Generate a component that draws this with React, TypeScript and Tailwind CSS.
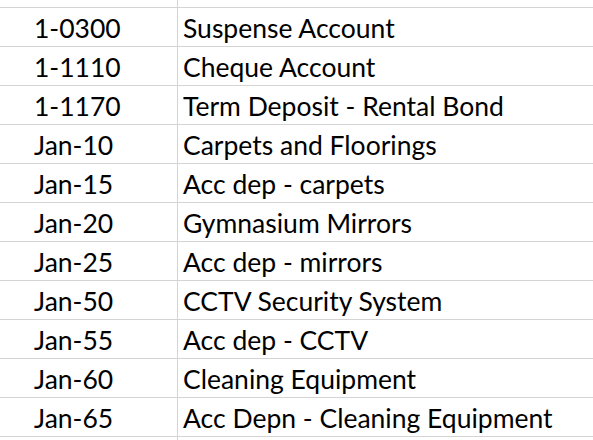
const rows: [string, string][] = [
  ['1-0300', 'Suspense Account'],
  ['1-1110', 'Cheque Account'],
  ['1-1170', 'Term Deposit - Rental Bond'],
  ['Jan-10', 'Carpets and Floorings'],
  ['Jan-15', 'Acc dep - carpets'],
  ['Jan-20', 'Gymnasium Mirrors'],
  ['Jan-25', 'Acc dep - mirrors'],
  ['Jan-50', 'CCTV Security System'],
  ['Jan-55', 'Acc dep - CCTV'],
  ['Jan-60', 'Cleaning Equipment'],
  ['Jan-65', 'Acc Depn - Cleaning Equipment'],
]

function Row({ code, name }: { code: string; name: string }) {
  return (
    <div className="flex h-[39px] border-t border-[#d4d4d4]">
      <div className="flex w-[178px] shrink-0 items-end border-r border-[#d4d4d4] pb-[5px] pl-[34px]">{code}</div>
      <div className="flex flex-1 items-end pb-[5px] pl-[5px] whitespace-nowrap">{name}</div>
    </div>
  )
}

export default function App() {
  return (
    <div className="h-[440px] w-[593px] overflow-hidden bg-white font-['Lato',sans-serif] text-[26.5px] leading-none text-black">
      <div className="flex h-[7px]">
        <div className="w-[178px] border-r border-[#d4d4d4]" />
      </div>
      {rows.map(([code, name]) => (
        <Row key={code} code={code} name={name} />
      ))}
      <div className="flex h-[10px] border-t border-[#d4d4d4]">
        <div className="w-[178px] border-r border-[#d4d4d4]" />
      </div>
    </div>
  )
}
